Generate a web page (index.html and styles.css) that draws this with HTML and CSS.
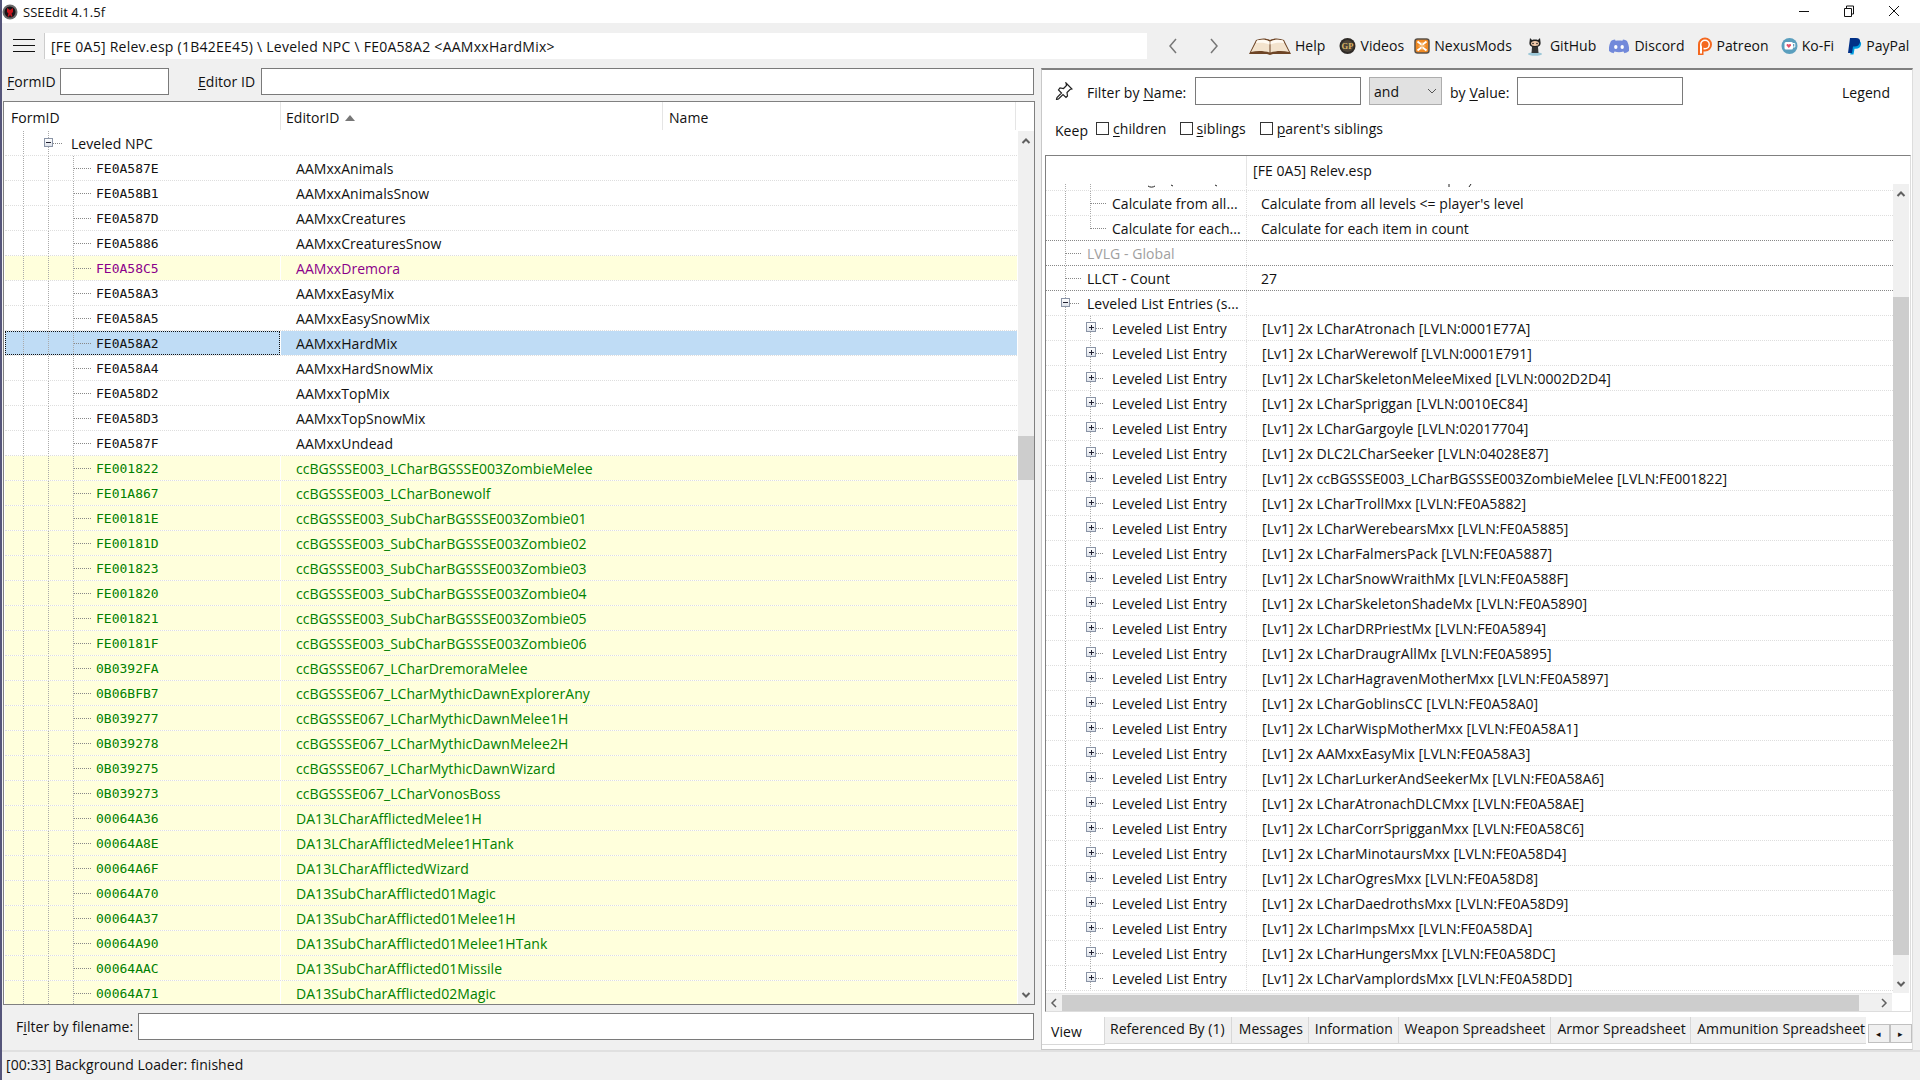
FILE: index.html
```html
<!DOCTYPE html>
<html lang="en">
  <head>
    <meta charset="UTF-8" />
    <title>SSEEdit 4.1.5f</title>
    <link rel="stylesheet" href="styles.css">
  </head>
  <body>
    <div class="window">
      <div class="titlebar">
        <svg class="app-icon" width="16" height="16" viewBox="0 0 16 16"><circle cx="8" cy="8" r="7.500" fill="#6a6a6a"/><circle cx="8" cy="8" r="5.500" fill="#1a1216"/><path d="M5 4l3 2 3-2v4l-1.500 1.500 1 3H9L8 10.500 7 12.500H5.500l1-3L5 8z" fill="#c8141c"/></svg>
        <span class="app-title">SSEEdit 4.1.5f</span>
        <div class="win-controls">
          <svg width="12" height="12" viewBox="0 0 12 12"><path d="M1 6.500h10" stroke="#111"/></svg>
          <svg width="12" height="12" viewBox="0 0 12 12"><path d="M1.500 3.500h7v8h-7zM3.500 3.500v-2.500h7v8h-2" fill="none" stroke="#111"/></svg>
          <svg width="12" height="12" viewBox="0 0 12 12"><path d="M1 1l10 10M11 1l-10 10" stroke="#111"/></svg>
        </div>
      </div>

      <div class="toolbar">
        <div class="burger"><i></i><i></i><i></i></div>
        <div class="path-field">[FE 0A5] Relev.esp (1B42EE45) \ Leveled NPC \ FE0A58A2 &lt;AAMxxHardMix&gt;</div>
        <svg class="nav-left" width="12" height="18" viewBox="0 0 12 18"><path d="M9 2L3 9l6 7" fill="none" stroke="#777" stroke-width="1.500"/></svg>
        <svg class="nav-right" width="12" height="18" viewBox="0 0 12 18"><path d="M3 2l6 7-6 7" fill="none" stroke="#777" stroke-width="1.500"/></svg>
        <div class="links">
          <span class="link link-help"><svg width="42" height="18" viewBox="0 0 42 18"><path d="M0 17L7 3c5-2 10-2 14 0 4-2 9-2 14 0l7 14H24l-3 1-3-1z" fill="#6e4526"/><path d="M2 15L8 3.500c4-1 9-1 12.500 1v11c-5-1.500-12-2-18.500-.5zM40 15L34 3.500c-4-1-9-1-12.500 1v11c5-1.500 12-2 18.500-.5z" fill="#f3e3cd"/><path d="M8 3.500c4-1 9-1 12.500 1v3c-4-2-9-2-13.500-1.500zM34 3.500c-4-1-9-1-12.500 1v3c4-2 9-2 13.500-1.500z" fill="#fffaf2"/></svg>Help</span>
          <span class="link link-videos"><svg width="17" height="18" viewBox="0 0 17 18"><circle cx="8.500" cy="9" r="8" fill="#2e2a26"/><circle cx="8.500" cy="9" r="6" fill="#4c4438"/><text x="8.500" y="12" font-family="Liberation Serif" font-size="8.500" letter-spacing="0" font-weight="bold" text-anchor="middle" fill="#d9b765">GP</text></svg>Videos</span>
          <span class="link link-nexus"><svg width="16" height="18" viewBox="0 0 16 18"><rect x="1" y="2" width="14" height="14" rx="2.500" fill="#f08a24" stroke="#5a5148" stroke-width="1.500"/><path d="M3.500 4.500L8 8M12.500 4.500L8 8M3.500 13.500L8 10M12.500 13.500L8 10" stroke="#fff" stroke-width="2"/><path d="M8 5v8M4.500 9h7" stroke="#f8c88c"/></svg>NexusMods</span>
          <span class="link link-github"><svg width="18" height="20" viewBox="0 0 18 20"><ellipse cx="9" cy="18" rx="7" ry="1.800" fill="#9dc8d8"/><path d="M4 2l2 2c2-.6 4-.6 6 0l2-2 .5 4c.6 2.500-1 5-4 5H7.500c-3 0-4.600-2.500-4-5z" fill="#222"/><ellipse cx="9" cy="7.500" rx="4" ry="2.500" fill="#f0c8a8"/><circle cx="7" cy="7.500" r=".8" fill="#222"/><circle cx="11" cy="7.500" r=".8" fill="#222"/><path d="M6 11h6l.5 6H5.500z" fill="#333"/></svg>GitHub</span>
          <span class="link link-discord"><svg width="20" height="18" viewBox="0 0 20 18"><path d="M6 2.500c-1.500.2-3 .8-4 1.500C.2 7.500-.3 10.500 0 14c1.500 1.200 3 1.800 4.500 2.200l1.100-1.700c2.900.9 5.900.9 8.800 0l1.100 1.700C17 15.800 18.500 15.200 20 14c.3-3.500-.2-6.500-2-10-1-.7-2.500-1.300-4-1.500l-.6 1.200c-2.300-.4-4.500-.4-6.800 0z" fill="#7289da"/><ellipse cx="6.800" cy="10" rx="1.700" ry="2" fill="#fff"/><ellipse cx="13.200" cy="10" rx="1.700" ry="2" fill="#fff"/></svg>Discord</span>
          <span class="link link-patreon"><svg width="16" height="20" viewBox="0 0 16 20"><path d="M1 19V8.500a7 7 0 1 1 7 7H6.500V19z" fill="#f4681f"/><path d="M3 17.500V8.500a5 5 0 1 1 5 5H5v4z" fill="#fff"/><circle cx="8" cy="8.500" r="3.500" fill="#f4681f"/><path d="M5 8.500h1.500v5.500H5z" fill="#f4681f"/></svg>Patreon</span>
          <span class="link link-kofi"><svg width="17" height="18" viewBox="0 0 17 18"><circle cx="8.500" cy="9" r="8" fill="#5b9fbe"/><rect x="3.500" y="5" width="8.500" height="7.500" rx="1.500" fill="#fff"/><path d="M12 6.500h1.800v3.500H12" fill="none" stroke="#fff"/><path d="M7.800 11L5.500 8.500c0-1.800 1.800-1.800 2.300-.8.500-1 2.300-1 2.300.8z" fill="#e4506a"/></svg>Ko-Fi</span>
          <span class="link link-paypal"><svg width="15" height="18" viewBox="0 0 15 18"><path d="M5 4h6c2.500 0 3.500 1.500 3 3.700-.5 2.700-2.500 4-5 4H7.500L6.500 17.500H3.300z" fill="#009cde"/><path d="M3 1h6c3 0 4.500 1.600 4 4.200C12.500 8 10.500 9.500 7.500 9.500H6L5 16H1z" fill="#003087"/></svg>PayPal</span>
        </div>
      </div>

      <div class="panes">
        <div class="left-pane">
          <div class="search-row">
            <label class="lbl-formid"><u>F</u>ormID</label>
            <div class="field field-formid"></div>
            <label class="lbl-editorid"><u>E</u>ditor ID</label>
            <div class="field field-editorid"></div>
          </div>
          <div class="nav-tree">
            <div class="tree-head">
              <div class="head-cell head-form">FormID</div>
              <div class="head-cell head-editor">EditorID <svg width="10" height="6" viewBox="0 0 10 6"><path d="M5 0l5 6H0z" fill="#777"/></svg></div>
              <div class="head-cell head-name">Name</div>
            </div>
            <div class="tree-body">
              <div class="tree-rows">
                <div class="row"><div class="cell form top"><span class="expander minus"></span><span class="stub short"></span><span class="group-name">Leveled NPC</span></div><div class="cell editor"></div></div>
                <div class="row"><div class="cell form"><span class="stub"></span><span class="fid">FE0A587E</span></div><div class="cell editor">AAMxxAnimals</div></div>
                <div class="row"><div class="cell form"><span class="stub"></span><span class="fid">FE0A58B1</span></div><div class="cell editor">AAMxxAnimalsSnow</div></div>
                <div class="row"><div class="cell form"><span class="stub"></span><span class="fid">FE0A587D</span></div><div class="cell editor">AAMxxCreatures</div></div>
                <div class="row"><div class="cell form"><span class="stub"></span><span class="fid">FE0A5886</span></div><div class="cell editor">AAMxxCreaturesSnow</div></div>
                <div class="row override"><div class="cell form"><span class="stub"></span><span class="fid">FE0A58C5</span></div><div class="cell editor">AAMxxDremora</div></div>
                <div class="row"><div class="cell form"><span class="stub"></span><span class="fid">FE0A58A3</span></div><div class="cell editor">AAMxxEasyMix</div></div>
                <div class="row"><div class="cell form"><span class="stub"></span><span class="fid">FE0A58A5</span></div><div class="cell editor">AAMxxEasySnowMix</div></div>
                <div class="row selected"><div class="cell form"><span class="stub"></span><span class="fid">FE0A58A2</span></div><div class="cell editor">AAMxxHardMix</div></div>
                <div class="row"><div class="cell form"><span class="stub"></span><span class="fid">FE0A58A4</span></div><div class="cell editor">AAMxxHardSnowMix</div></div>
                <div class="row"><div class="cell form"><span class="stub"></span><span class="fid">FE0A58D2</span></div><div class="cell editor">AAMxxTopMix</div></div>
                <div class="row"><div class="cell form"><span class="stub"></span><span class="fid">FE0A58D3</span></div><div class="cell editor">AAMxxTopSnowMix</div></div>
                <div class="row"><div class="cell form"><span class="stub"></span><span class="fid">FE0A587F</span></div><div class="cell editor">AAMxxUndead</div></div>
                <div class="row winner"><div class="cell form"><span class="stub"></span><span class="fid">FE001822</span></div><div class="cell editor">ccBGSSSE003_LCharBGSSSE003ZombieMelee</div></div>
                <div class="row winner"><div class="cell form"><span class="stub"></span><span class="fid">FE01A867</span></div><div class="cell editor">ccBGSSSE003_LCharBonewolf</div></div>
                <div class="row winner"><div class="cell form"><span class="stub"></span><span class="fid">FE00181E</span></div><div class="cell editor">ccBGSSSE003_SubCharBGSSSE003Zombie01</div></div>
                <div class="row winner"><div class="cell form"><span class="stub"></span><span class="fid">FE00181D</span></div><div class="cell editor">ccBGSSSE003_SubCharBGSSSE003Zombie02</div></div>
                <div class="row winner"><div class="cell form"><span class="stub"></span><span class="fid">FE001823</span></div><div class="cell editor">ccBGSSSE003_SubCharBGSSSE003Zombie03</div></div>
                <div class="row winner"><div class="cell form"><span class="stub"></span><span class="fid">FE001820</span></div><div class="cell editor">ccBGSSSE003_SubCharBGSSSE003Zombie04</div></div>
                <div class="row winner"><div class="cell form"><span class="stub"></span><span class="fid">FE001821</span></div><div class="cell editor">ccBGSSSE003_SubCharBGSSSE003Zombie05</div></div>
                <div class="row winner"><div class="cell form"><span class="stub"></span><span class="fid">FE00181F</span></div><div class="cell editor">ccBGSSSE003_SubCharBGSSSE003Zombie06</div></div>
                <div class="row winner"><div class="cell form"><span class="stub"></span><span class="fid">0B0392FA</span></div><div class="cell editor">ccBGSSSE067_LCharDremoraMelee</div></div>
                <div class="row winner"><div class="cell form"><span class="stub"></span><span class="fid">0B06BFB7</span></div><div class="cell editor">ccBGSSSE067_LCharMythicDawnExplorerAny</div></div>
                <div class="row winner"><div class="cell form"><span class="stub"></span><span class="fid">0B039277</span></div><div class="cell editor">ccBGSSSE067_LCharMythicDawnMelee1H</div></div>
                <div class="row winner"><div class="cell form"><span class="stub"></span><span class="fid">0B039278</span></div><div class="cell editor">ccBGSSSE067_LCharMythicDawnMelee2H</div></div>
                <div class="row winner"><div class="cell form"><span class="stub"></span><span class="fid">0B039275</span></div><div class="cell editor">ccBGSSSE067_LCharMythicDawnWizard</div></div>
                <div class="row winner"><div class="cell form"><span class="stub"></span><span class="fid">0B039273</span></div><div class="cell editor">ccBGSSSE067_LCharVonosBoss</div></div>
                <div class="row winner"><div class="cell form"><span class="stub"></span><span class="fid">00064A36</span></div><div class="cell editor">DA13LCharAfflictedMelee1H</div></div>
                <div class="row winner"><div class="cell form"><span class="stub"></span><span class="fid">00064A8E</span></div><div class="cell editor">DA13LCharAfflictedMelee1HTank</div></div>
                <div class="row winner"><div class="cell form"><span class="stub"></span><span class="fid">00064A6F</span></div><div class="cell editor">DA13LCharAfflictedWizard</div></div>
                <div class="row winner"><div class="cell form"><span class="stub"></span><span class="fid">00064A70</span></div><div class="cell editor">DA13SubCharAfflicted01Magic</div></div>
                <div class="row winner"><div class="cell form"><span class="stub"></span><span class="fid">00064A37</span></div><div class="cell editor">DA13SubCharAfflicted01Melee1H</div></div>
                <div class="row winner"><div class="cell form"><span class="stub"></span><span class="fid">00064A90</span></div><div class="cell editor">DA13SubCharAfflicted01Melee1HTank</div></div>
                <div class="row winner"><div class="cell form"><span class="stub"></span><span class="fid">00064AAC</span></div><div class="cell editor">DA13SubCharAfflicted01Missile</div></div>
                <div class="row winner last"><div class="cell form"><span class="stub"></span><span class="fid">00064A71</span></div><div class="cell editor">DA13SubCharAfflicted02Magic</div></div>
              </div>
              <div class="vscroll vscroll-left">
                <svg width="12" height="18" viewBox="0 0 12 18"><path d="M2.500 11L6 7.500 9.500 11" fill="none" stroke="#606060" stroke-width="2"/></svg>
                <div class="thumb-track thumb-track-left"><div class="thumb"></div></div>
                <svg width="12" height="18" viewBox="0 0 12 18"><path d="M2.500 7L6 10.500 9.500 7" fill="none" stroke="#606060" stroke-width="2"/></svg>
              </div>
            </div>
          </div>
          <div class="filter-file">
            <label>F<u>i</u>lter by filename:</label>
            <div class="field field-file"></div>
          </div>
        </div>

        <div class="right-pane">
          <div class="filter-panel">
            <div class="filter-line">
              <svg class="pin" width="18" height="18" viewBox="0 0 18 18"><path d="M11 1l6 6-2 .5-3 3 .5 3.500-1.500 1.500-3-3-4.500 4.500-2 .5.500-2 4.500-4.500-3-3L5 6l3.500.5 3-3z" fill="none" stroke="#222" stroke-width="1.200"/></svg>
              <label class="lbl-name">Filter by <u>N</u>ame:</label>
              <div class="field field-name"></div>
              <div class="combo"><span>and</span><svg width="10" height="6" viewBox="0 0 10 6"><path d="M1 1l4 4 4-4" fill="none" stroke="#555"/></svg></div>
              <label class="lbl-value">by <u>V</u>alue:</label>
              <div class="field field-value"></div>
              <span class="legend">Legend</span>
            </div>
            <div class="keep-line">
              <span class="keep">Keep</span>
              <span class="check check-children"><i></i><span><u>c</u>hildren</span></span>
              <span class="check check-siblings"><i></i><span><u>s</u>iblings</span></span>
              <span class="check check-parents"><i></i><span><u>p</u>arent's siblings</span></span>
            </div>
          </div>
          <div class="view-tree">
            <div class="view-head">
              <div class="view-head-blank"></div>
              <div class="view-head-file">[FE 0A5] Relev.esp</div>
            </div>
            <div class="view-body">
              <div class="view-rows">
                <div class="vrow clipped">
                  <div class="vcell name lvl2"></div>
                  <!-- bottoms of the letters in the row that is scrolled out of view -->
                  <svg class="cut-marks" width="646" height="6" viewBox="0 0 646 6"><path d="M-99 3c2 1.500 5 1.500 7 0M-76 2l2 1M-32 2l2 1M202 1v3M224 1l-2 3" fill="none" stroke="#222" transform="translate(0 -1)"/></svg>
                </div>
                <div class="vrow"><div class="vcell name lvl2"><span class="vstub"></span><span class="vname">Calculate from all...</span></div><div class="vcell value">Calculate from all levels &lt;= player's level</div></div>
                <div class="vrow strong"><div class="vcell name lvl2 end"><span class="vstub"></span><span class="vname">Calculate for each...</span></div><div class="vcell value">Calculate for each item in count</div></div>
                <div class="vrow strong"><div class="vcell name lvl1"><span class="vstub1"></span><span class="vname muted">LVLG - Global</span></div><div class="vcell value"></div></div>
                <div class="vrow strong"><div class="vcell name lvl1"><span class="vstub1"></span><span class="vname">LLCT - Count</span></div><div class="vcell value">27</div></div>
                <div class="vrow"><div class="vcell name lvl1 entries"><span class="expander minus"></span><span class="stub short"></span><span class="vname">Leveled List Entries (s...</span></div><div class="vcell value"></div></div>
                <div class="vrow"><div class="vcell name entry"><span class="expander plus"></span><span class="stub tiny"></span><span class="vname">Leveled List Entry</span></div><div class="vcell value item">[Lv1] 2x LCharAtronach [LVLN:0001E77A]</div></div>
                <div class="vrow"><div class="vcell name entry"><span class="expander plus"></span><span class="stub tiny"></span><span class="vname">Leveled List Entry</span></div><div class="vcell value item">[Lv1] 2x LCharWerewolf [LVLN:0001E791]</div></div>
                <div class="vrow"><div class="vcell name entry"><span class="expander plus"></span><span class="stub tiny"></span><span class="vname">Leveled List Entry</span></div><div class="vcell value item">[Lv1] 2x LCharSkeletonMeleeMixed [LVLN:0002D2D4]</div></div>
                <div class="vrow"><div class="vcell name entry"><span class="expander plus"></span><span class="stub tiny"></span><span class="vname">Leveled List Entry</span></div><div class="vcell value item">[Lv1] 2x LCharSpriggan [LVLN:0010EC84]</div></div>
                <div class="vrow"><div class="vcell name entry"><span class="expander plus"></span><span class="stub tiny"></span><span class="vname">Leveled List Entry</span></div><div class="vcell value item">[Lv1] 2x LCharGargoyle [LVLN:02017704]</div></div>
                <div class="vrow"><div class="vcell name entry"><span class="expander plus"></span><span class="stub tiny"></span><span class="vname">Leveled List Entry</span></div><div class="vcell value item">[Lv1] 2x DLC2LCharSeeker [LVLN:04028E87]</div></div>
                <div class="vrow"><div class="vcell name entry"><span class="expander plus"></span><span class="stub tiny"></span><span class="vname">Leveled List Entry</span></div><div class="vcell value item">[Lv1] 2x ccBGSSSE003_LCharBGSSSE003ZombieMelee [LVLN:FE001822]</div></div>
                <div class="vrow"><div class="vcell name entry"><span class="expander plus"></span><span class="stub tiny"></span><span class="vname">Leveled List Entry</span></div><div class="vcell value item">[Lv1] 2x LCharTrollMxx [LVLN:FE0A5882]</div></div>
                <div class="vrow"><div class="vcell name entry"><span class="expander plus"></span><span class="stub tiny"></span><span class="vname">Leveled List Entry</span></div><div class="vcell value item">[Lv1] 2x LCharWerebearsMxx [LVLN:FE0A5885]</div></div>
                <div class="vrow"><div class="vcell name entry"><span class="expander plus"></span><span class="stub tiny"></span><span class="vname">Leveled List Entry</span></div><div class="vcell value item">[Lv1] 2x LCharFalmersPack [LVLN:FE0A5887]</div></div>
                <div class="vrow"><div class="vcell name entry"><span class="expander plus"></span><span class="stub tiny"></span><span class="vname">Leveled List Entry</span></div><div class="vcell value item">[Lv1] 2x LCharSnowWraithMx [LVLN:FE0A588F]</div></div>
                <div class="vrow"><div class="vcell name entry"><span class="expander plus"></span><span class="stub tiny"></span><span class="vname">Leveled List Entry</span></div><div class="vcell value item">[Lv1] 2x LCharSkeletonShadeMx [LVLN:FE0A5890]</div></div>
                <div class="vrow"><div class="vcell name entry"><span class="expander plus"></span><span class="stub tiny"></span><span class="vname">Leveled List Entry</span></div><div class="vcell value item">[Lv1] 2x LCharDRPriestMx [LVLN:FE0A5894]</div></div>
                <div class="vrow"><div class="vcell name entry"><span class="expander plus"></span><span class="stub tiny"></span><span class="vname">Leveled List Entry</span></div><div class="vcell value item">[Lv1] 2x LCharDraugrAllMx [LVLN:FE0A5895]</div></div>
                <div class="vrow"><div class="vcell name entry"><span class="expander plus"></span><span class="stub tiny"></span><span class="vname">Leveled List Entry</span></div><div class="vcell value item">[Lv1] 2x LCharHagravenMotherMxx [LVLN:FE0A5897]</div></div>
                <div class="vrow"><div class="vcell name entry"><span class="expander plus"></span><span class="stub tiny"></span><span class="vname">Leveled List Entry</span></div><div class="vcell value item">[Lv1] 2x LCharGoblinsCC [LVLN:FE0A58A0]</div></div>
                <div class="vrow"><div class="vcell name entry"><span class="expander plus"></span><span class="stub tiny"></span><span class="vname">Leveled List Entry</span></div><div class="vcell value item">[Lv1] 2x LCharWispMotherMxx [LVLN:FE0A58A1]</div></div>
                <div class="vrow"><div class="vcell name entry"><span class="expander plus"></span><span class="stub tiny"></span><span class="vname">Leveled List Entry</span></div><div class="vcell value item">[Lv1] 2x AAMxxEasyMix [LVLN:FE0A58A3]</div></div>
                <div class="vrow"><div class="vcell name entry"><span class="expander plus"></span><span class="stub tiny"></span><span class="vname">Leveled List Entry</span></div><div class="vcell value item">[Lv1] 2x LCharLurkerAndSeekerMx [LVLN:FE0A58A6]</div></div>
                <div class="vrow"><div class="vcell name entry"><span class="expander plus"></span><span class="stub tiny"></span><span class="vname">Leveled List Entry</span></div><div class="vcell value item">[Lv1] 2x LCharAtronachDLCMxx [LVLN:FE0A58AE]</div></div>
                <div class="vrow"><div class="vcell name entry"><span class="expander plus"></span><span class="stub tiny"></span><span class="vname">Leveled List Entry</span></div><div class="vcell value item">[Lv1] 2x LCharCorrSprigganMxx [LVLN:FE0A58C6]</div></div>
                <div class="vrow"><div class="vcell name entry"><span class="expander plus"></span><span class="stub tiny"></span><span class="vname">Leveled List Entry</span></div><div class="vcell value item">[Lv1] 2x LCharMinotaursMxx [LVLN:FE0A58D4]</div></div>
                <div class="vrow"><div class="vcell name entry"><span class="expander plus"></span><span class="stub tiny"></span><span class="vname">Leveled List Entry</span></div><div class="vcell value item">[Lv1] 2x LCharOgresMxx [LVLN:FE0A58D8]</div></div>
                <div class="vrow"><div class="vcell name entry"><span class="expander plus"></span><span class="stub tiny"></span><span class="vname">Leveled List Entry</span></div><div class="vcell value item">[Lv1] 2x LCharDaedrothsMxx [LVLN:FE0A58D9]</div></div>
                <div class="vrow"><div class="vcell name entry"><span class="expander plus"></span><span class="stub tiny"></span><span class="vname">Leveled List Entry</span></div><div class="vcell value item">[Lv1] 2x LCharImpsMxx [LVLN:FE0A58DA]</div></div>
                <div class="vrow"><div class="vcell name entry"><span class="expander plus"></span><span class="stub tiny"></span><span class="vname">Leveled List Entry</span></div><div class="vcell value item">[Lv1] 2x LCharHungersMxx [LVLN:FE0A58DC]</div></div>
                <div class="vrow"><div class="vcell name entry"><span class="expander plus"></span><span class="stub tiny"></span><span class="vname">Leveled List Entry</span></div><div class="vcell value item">[Lv1] 2x LCharVamplordsMxx [LVLN:FE0A58DD]</div></div>
              </div>
              <div class="vscroll vscroll-right">
                <svg width="12" height="18" viewBox="0 0 12 18"><path d="M2.500 11L6 7.500 9.500 11" fill="none" stroke="#606060" stroke-width="2"/></svg>
                <div class="thumb-track thumb-track-right"><div class="thumb"></div></div>
                <svg width="12" height="18" viewBox="0 0 12 18"><path d="M2.500 7L6 10.500 9.500 7" fill="none" stroke="#606060" stroke-width="2"/></svg>
              </div>
            </div>
            <div class="hscroll">
              <svg width="16" height="16" viewBox="0 0 16 16"><path d="M10 4L6 8l4 4" fill="none" stroke="#606060" stroke-width="1.500"/></svg>
              <div class="hthumb"></div>
              <svg width="16" height="16" viewBox="0 0 16 16"><path d="M6 4l4 4-4 4" fill="none" stroke="#606060" stroke-width="1.500"/></svg>
            </div>
          </div>
          <div class="tabs">
            <span class="tab active">View</span>
            <span class="tab tab-ref">Referenced By (1)</span>
            <span class="tab tab-msg">Messages</span>
            <span class="tab tab-info">Information</span>
            <span class="tab tab-weapon">Weapon Spreadsheet</span>
            <span class="tab tab-armor">Armor Spreadsheet</span>
            <span class="tab tab-ammo">Ammunition Spreadsheet</span>
            <span class="tab-arrows"><b>&#9666;</b><b>&#9656;</b></span>
          </div>
        </div>
      </div>

      <div class="statusbar">[00:33] Background Loader: finished</div>
    </div>
  </body>
</html>
```
FILE: styles.css
```css
* {
  box-sizing: border-box;
}
html,
body {
  margin: 0;
  height: 100%;
  overflow: hidden;
}
body {
  font-family: "Open Sans", "Noto Sans", sans-serif;
  font-size: 14px;
  letter-spacing: 0.05px;
  color: #111;
}
u {
  text-underline-offset: 2px;
}
.window {
  width: 1920px;
  height: 1080px;
  display: flex;
  flex-direction: column;
  background: #f0f0f0;
  border-left: 2px solid #55557a;
}

/* title bar */
.titlebar {
  height: 23px;
  background: #fff;
  display: flex;
  align-items: center;
  flex-shrink: 0;
}
.app-icon {
  margin-right: 5px;
}
.app-title {
  font-size: 13px;
}
.win-controls {
  margin-left: auto;
  display: flex;
  gap: 33px;
  padding-right: 20px;
  padding-bottom: 2px;
}

/* tool bar */
.toolbar {
  height: 45px;
  display: flex;
  align-items: center;
  flex-shrink: 0;
}
.burger {
  width: 22px;
  margin-left: 11px;
  display: flex;
  flex-direction: column;
  gap: 5px;
}
.burger i {
  height: 1px;
  background: #111;
}
.path-field {
  width: 1103px;
  height: 26px;
  line-height: 27px;
  margin-left: 9px;
  padding-left: 6px;
  background: #fff;
  border-left: 1px solid #ccc;
  letter-spacing: 0.26px;
}
.nav-left {
  margin-left: 20px;
}
.nav-right {
  margin-left: 29px;
}
.links {
  display: flex;
  align-items: center;
  margin-left: 29px;
}
.link {
  display: flex;
  align-items: center;
  white-space: nowrap;
  gap: 4px;
}
.link-videos {
  margin-left: 14px;
}
.link-nexus {
  margin-left: 10px;
}
.link-github {
  margin-left: 14px;
  gap: 6px;
}
.link-discord {
  margin-left: 13px;
  gap: 5px;
}
.link-patreon {
  margin-left: 12px;
}
.link-kofi {
  margin-left: 12px;
}
.link-paypal {
  margin-left: 13px;
}

/* panes */
.panes {
  height: 982px;
  display: flex;
  flex-shrink: 0;
}
.left-pane {
  width: 1033px;
  display: flex;
  flex-direction: column;
  padding-left: 1px;
}
.right-pane {
  width: 872px;
  margin-left: 6px;
  display: flex;
  flex-direction: column;
  background: #fff;
  border: 1px solid #c8c8c8;
  border-top: 2px solid #808080;
  border-right: 1px solid #ddd;
}
.field {
  background: #fff;
  border: 1px solid #7a7a7a;
  height: 27px;
}

/* left pane */
.search-row {
  height: 33px;
  display: flex;
  align-items: flex-start;
  line-height: 27px;
}
.lbl-formid {
  margin-left: 4px;
  width: 53px;
}
.field-formid {
  width: 109px;
}
.lbl-editorid {
  margin-left: 29px;
  width: 63px;
}
.field-editorid {
  width: 773px;
}
.nav-tree {
  height: 904px;
  background: #fff;
  border: 1px solid #808080;
  display: flex;
  flex-direction: column;
}
.tree-head {
  height: 29px;
  display: flex;
  flex-shrink: 0;
}
.head-cell {
  line-height: 31px;
  height: 28px;
  border-right: 1px solid #e5e5e5;
  padding-left: 7px;
}
.head-form {
  width: 277px;
}
.head-editor {
  width: 382px;
  padding-left: 5px;
}
.head-editor svg {
  margin-left: 2px;
  vertical-align: 2px;
}
.head-name {
  width: 353px;
  padding-left: 6px;
}
.tree-body {
  flex: 1;
  display: flex;
  min-height: 0;
}
.tree-rows {
  flex: none;
  width: 1013px;
  padding-left: 1px;
  overflow: hidden;
}
.row {
  height: 25px;
  display: flex;
  border-bottom: 1px dotted #dedede;
}
.cell {
  display: flex;
  align-items: center;
  white-space: nowrap;
  height: 100%;
}
.cell.form {
  width: 275px;
  margin-right: 1px;
  background-image:
    repeating-linear-gradient(#aaa 0 1px, transparent 1px 2px),
    repeating-linear-gradient(#aaa 0 1px, transparent 1px 2px),
    repeating-linear-gradient(#aaa 0 1px, transparent 1px 2px);
  background-size: 1px 26px;
  background-position: 18px 0, 43px 0, 68px 0;
  background-repeat: no-repeat;
}
.cell.form.top {
  background-image:
    repeating-linear-gradient(#aaa 0 1px, transparent 1px 2px),
    repeating-linear-gradient(#aaa 0 1px, transparent 1px 2px);
  background-position: 18px 0, 43px 0;
  padding-left: 39px;
}
.cell.editor {
  flex: 1;
  padding-left: 15px;
}
.stub {
  width: 17px;
  margin-left: 69px;
  margin-right: 5px;
  border-top: 1px dotted #888;
  height: 1px;
}
.stub.short {
  margin-left: 0;
  margin-right: 0;
  width: 9px;
}
.stub.tiny {
  margin-left: 0;
  margin-right: 0;
  width: 7px;
}
.group-name {
  margin-left: 9px;
}
.fid {
  font-family: "DejaVu Sans Mono", "Liberation Mono", monospace;
  font-size: 13px;
  letter-spacing: 0;
}
.expander {
  width: 9px;
  height: 9px;
  border: 1px solid #8a94a6;
  background: linear-gradient(#fff, #dde2ea);
  flex-shrink: 0;
  display: flex;
  align-items: center;
  justify-content: center;
  margin-top: -2px;
}
.expander.minus::before {
  content: "";
  width: 5px;
  height: 1px;
  background: #223;
}
.expander.plus {
  background:
    linear-gradient(#223, #223) center / 5px 1px no-repeat,
    linear-gradient(#223, #223) center / 1px 5px no-repeat,
    linear-gradient(#fff, #dde2ea);
}
.row.override .cell,
.row.winner .cell {
  background-color: #ffffdc;
}
.row.override .cell.editor,
.row.override .fid {
  color: #8b008b;
}
.row.winner .cell.editor,
.row.winner .fid {
  color: #008000;
}
.row.selected .cell {
  background-color: #bfdcf5;
}
.row.selected .cell.form {
  outline: 1px dotted #111;
  outline-offset: -1px;
}
.row.last {
  border-bottom: 0;
}
.vscroll {
  display: flex;
  flex-direction: column;
  align-items: center;
  background: #f0f0f0;
  padding-top: 1px;
  width: 16px;
}
.vscroll-left {
  margin-left: 1px;
}
.thumb-track {
  flex: 1;
  width: 100%;
}
.thumb {
  width: 100%;
  background: #cdcdcd;
}
.thumb-track-left .thumb {
  height: 44px;
  margin-top: 286px;
}
.thumb-track-right .thumb {
  height: 658px;
  margin-top: 94px;
}
.filter-file {
  height: 44px;
  display: flex;
  align-items: center;
  padding-bottom: 2px;
}
.filter-file label {
  margin-left: 13px;
  width: 122px;
}
.field-file {
  width: 896px;
}

/* right pane */
.filter-panel {
  height: 85px;
  flex-shrink: 0;
  padding-left: 13px;
}
.filter-line {
  display: flex;
  align-items: center;
  height: 28px;
  margin-top: 7px;
}
.filter-line .field {
  height: 28px;
}
.lbl-name,
.lbl-value,
.legend {
  padding-top: 3px;
}
.lbl-name {
  margin-left: 14px;
  width: 108px;
}
.field-name {
  width: 166px;
}
.combo {
  width: 73px;
  height: 28px;
  margin-left: 8px;
  padding: 0 4px;
  background: #e1e1e1;
  border: 1px solid #adadad;
  display: flex;
  align-items: center;
  justify-content: space-between;
}
.combo span {
  padding-top: 1px;
}
.lbl-value {
  margin-left: 8px;
  width: 67px;
}
.field-value {
  width: 166px;
}
.legend {
  margin-left: 159px;
  padding-top: 2px;
}
.keep-line {
  display: flex;
  align-items: center;
  height: 27px;
  margin-top: 10px;
}
.keep {
  width: 41px;
  padding-top: 3px;
}
.check {
  display: flex;
  align-items: center;
  gap: 4px;
}
.check i {
  width: 13px;
  height: 13px;
  background: #fff;
  border: 1px solid #333;
  display: block;
}
.check-siblings {
  margin-left: 13px;
}
.check-parents {
  margin-left: 14px;
}
.view-tree {
  width: 866px;
  height: 857px;
  margin-left: 3px;
  border: 1px solid #808080;
  border-right-color: #ddd;
  border-bottom-color: #ddd;
  display: flex;
  flex-direction: column;
}
.view-head {
  height: 28px;
  display: flex;
  flex-shrink: 0;
  line-height: 30px;
}
.view-head-blank {
  width: 201px;
  border-right: 1px solid #e5e5e5;
}
.view-head-file {
  padding-left: 6px;
}
.view-body {
  flex: 1;
  display: flex;
  min-height: 0;
}
.view-rows {
  flex: none;
  width: 847px;
  overflow: hidden;
}
.vrow {
  height: 25px;
  display: flex;
  border-bottom: 1px dotted #dedede;
}
.vrow.strong {
  border-bottom-color: #888;
}
.vrow.clipped {
  height: 7px;
  overflow: hidden;
}
.cut-marks {
  overflow: visible;
  flex: none;
}
.vcell {
  display: flex;
  align-items: center;
  white-space: nowrap;
  height: 100%;
}
.vcell.name {
  width: 201px;
  flex: none;
  border-right: 1px dotted #dedede;
  background:
    repeating-linear-gradient(#aaa 0 1px, transparent 1px 2px) 19px 0 / 1px 100% no-repeat;
}
.vcell.value {
  flex: 1;
  padding-left: 14px;
}
.vcell.value.item {
  padding-left: 15px;
}
.vcell.name.lvl2 {
  padding-left: 44px;
  background:
    repeating-linear-gradient(#aaa 0 1px, transparent 1px 2px) 19px 0 / 1px 100% no-repeat,
    repeating-linear-gradient(#aaa 0 1px, transparent 1px 2px) 44px 0 / 1px 100% no-repeat;
}
.vcell.name.lvl2.end {
  background:
    repeating-linear-gradient(#aaa 0 1px, transparent 1px 2px) 19px 0 / 1px 100% no-repeat,
    repeating-linear-gradient(#aaa 0 1px, transparent 1px 2px) 44px 0 / 1px 50% no-repeat;
}
.vcell.name.entry {
  background:
    repeating-linear-gradient(#aaa 0 1px, transparent 1px 2px) 19px 0 / 1px 100% no-repeat,
    repeating-linear-gradient(#aaa 0 1px, transparent 1px 2px) 44px 0 / 1px 100% no-repeat;
}
.vstub {
  width: 16px;
  margin-right: 6px;
  border-top: 1px dotted #888;
}
.vstub1 {
  width: 16px;
  margin-left: 19px;
  margin-right: 6px;
  border-top: 1px dotted #888;
}
.vname {
  overflow: hidden;
}
.vname.muted {
  color: #a0a0a0;
}
.entries {
  padding-left: 15px;
}
.entries .vname {
  margin-left: 8px;
}
.entry {
  padding-left: 40px;
}
.entry .vname {
  margin-left: 9px;
}
.entry .expander {
  width: 10px;
  height: 10px;
}
.hscroll {
  height: 18px;
  display: flex;
  align-items: center;
  background: #f0f0f0;
  width: 846px;
  border-top: 1px solid #e8e8e8;
}
.hthumb {
  flex: 1;
  height: 16px;
  background: #cdcdcd;
  margin-right: 17px;
}
.tabs {
  height: 29px;
  margin-top: 4px;
  display: flex;
  align-items: flex-start;
  white-space: nowrap;
}
.tab {
  height: 27px;
  line-height: 24px;
  background: #f0f0f0;
  margin-top: 1px;
  border-right: 1px solid #d8d8d8;
  border-bottom: 1px solid #d8d8d8;
  padding-left: 6px;
}
.tab.active {
  width: 63px;
  height: 28px;
  background: #fff;
  line-height: 30px;
  padding-left: 9px;
}
.tab-ref {
  width: 127px;
  padding-left: 5px;
}
.tab-msg {
  width: 77px;
  padding-left: 7px;
}
.tab-info {
  width: 90px;
}
.tab-weapon {
  width: 153px;
}
.tab-armor {
  width: 140px;
}
.tab-ammo {
  width: 175px;
  border-right: 0;
}
.tab-arrows {
  display: flex;
  margin-top: 8px;
  margin-left: 2px;
}
.tab-arrows b {
  width: 22px;
  height: 19px;
  background: #f0f0f0;
  border: 1px solid #c0c0c0;
  font-size: 9px;
  font-weight: normal;
  line-height: 17px;
  text-align: center;
}

/* status bar */
.statusbar {
  flex: 1;
  line-height: 26px;
  padding-left: 4px;
  border-top: 2px solid #e0e0e0;
}
```
